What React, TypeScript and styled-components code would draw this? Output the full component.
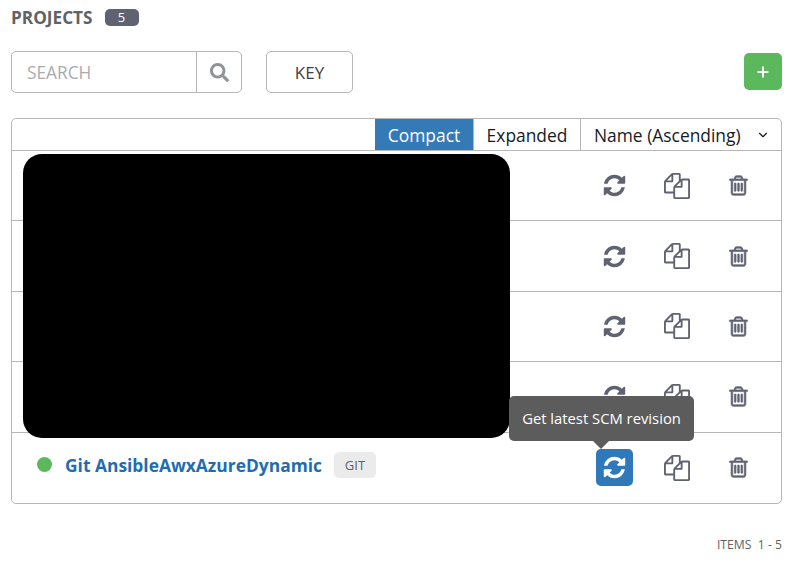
import styled, { createGlobalStyle } from 'styled-components';
import { FaSearch } from 'react-icons/fa';
import { ChevronDown, Plus } from 'lucide-react';

const GlobalStyle = createGlobalStyle`
  html, body {
    margin: 0;
    background: #fff;
    font-family: 'Open Sans', sans-serif;
  }
`;

const Page = styled.div`
  width: 800px;
  height: 563px;
  padding: 0 18px 0 11px;
  box-sizing: border-box;
  overflow: hidden;
  color: #161b1f;
`;

const TitleRow = styled.div`
  display: flex;
  align-items: center;
  gap: 12px;
  height: 34px;
`;

const Title = styled.h1`
  margin: 0;
  font-size: 17.2px;
  font-weight: 700;
  color: #606266;
`;

const CountBadge = styled.span`
  width: 34px;
  height: 17px;
  border-radius: 5px;
  background: #5f6270;
  color: #fff;
  font-size: 13px;
  line-height: 17px;
  text-align: center;
`;

const Toolbar = styled.div`
  display: flex;
  align-items: center;
  margin-top: 17px;
  height: 42px;
`;

const SearchBox = styled.div`
  display: flex;
  width: 231px;
  height: 42px;
  box-sizing: border-box;
  border: 1px solid #b7b7b7;
  border-radius: 5px;
`;

const SearchText = styled.span`
  flex: 1;
  padding-left: 15px;
  font-size: 17.3px;
  line-height: 41px;
  color: #a9abae;
`;

const SearchButton = styled.span`
  display: flex;
  align-items: center;
  justify-content: center;
  width: 44px;
  border-left: 1px solid #b7b7b7;
  color: #8f9499;
  font-size: 19px;
`;

const KeyButton = styled.button`
  width: 87px;
  height: 42px;
  margin-left: 24px;
  padding: 0;
  border: 1px solid #b7b7b7;
  border-radius: 5px;
  background: #fff;
  color: #3f4145;
  font-family: inherit;
  font-size: 17px;
`;

const AddButton = styled.button`
  display: flex;
  align-items: center;
  justify-content: center;
  align-self: flex-start;
  width: 38px;
  height: 37px;
  margin: 2px 0 0 auto;
  padding: 0;
  border: 0;
  border-radius: 5px;
  background: #5cb85c;
  color: #fff;
`;

const Panel = styled.section`
  position: relative;
  width: 771px;
  margin-top: 25px;
  box-sizing: border-box;
  border: 1px solid #b7b7b7;
  border-radius: 5px;
`;

const ViewBar = styled.div`
  display: flex;
  justify-content: flex-end;
  height: 31px;
  border-bottom: 1px solid #b7b7b7;
`;

const ViewTab = styled.span<{ $active?: boolean }>`
  display: flex;
  align-items: center;
  justify-content: center;
  width: ${(p) => (p.$active ? 99 : 107)}px;
  box-sizing: border-box;
  background: ${(p) => (p.$active ? '#337ab7' : '#fff')};
  color: ${(p) => (p.$active ? '#fff' : '#161b1f')};
  border-right: 1px solid #b7b7b7;
  font-size: 17.4px;
`;

const SortSelect = styled.span`
  display: flex;
  align-items: center;
  justify-content: space-between;
  width: 200px;
  padding: 0 11px 0 13px;
  box-sizing: border-box;
  font-size: 17.4px;
`;

const Row = styled.div<{ $last?: boolean }>`
  display: flex;
  align-items: center;
  height: ${(p) => (p.$last ? 70 : 70.4)}px;
  box-sizing: border-box;
  padding-left: 25px;
  border-bottom: ${(p) => (p.$last ? 'none' : '1px solid #b7b7b7')};
`;

const ProjectInfo = styled.div`
  display: flex;
  align-items: center;
  padding-bottom: 6px;
`;

const StatusDot = styled.span`
  width: 15px;
  height: 15px;
  border-radius: 50%;
  background: #5cb85c;
`;

const ProjectName = styled.a`
  margin-left: 13px;
  color: #1f6db0;
  font-size: 17.4px;
  font-weight: 700;
`;

const TypeTag = styled.span`
  margin-left: 12px;
  width: 42px;
  height: 26px;
  border-radius: 5px;
  background: #ebebeb;
  color: #606266;
  font-size: 13px;
  line-height: 26px;
  text-align: center;
`;

const Actions = styled.div`
  display: flex;
  align-items: center;
  gap: 25px;
  margin-left: auto;
  padding-right: 24px;
`;

const ActionButton = styled.span<{ $active?: boolean }>`
  display: flex;
  align-items: center;
  justify-content: center;
  width: 37px;
  height: 37px;
  border-radius: 5px;
  background: ${(p) => (p.$active ? '#2f78b9' : 'transparent')};
  color: ${(p) => (p.$active ? '#fff' : '#5f6270')};
`;

const Redaction = styled.div`
  position: absolute;
  left: 11px;
  top: 35px;
  width: 487px;
  height: 284px;
  border-radius: 19px;
  background: #000;
`;

const Tooltip = styled.div`
  position: absolute;
  left: 497px;
  top: 277px;
  width: 185px;
  height: 45px;
  border-radius: 5px;
  background: #5c5c5c;
  color: #fff;
  font-size: 14.8px;
  line-height: 44px;
  text-align: center;
  &::after {
    content: '';
    position: absolute;
    left: 84px;
    bottom: -8px;
    border-left: 8px solid transparent;
    border-right: 8px solid transparent;
    border-top: 8px solid #5c5c5c;
  }
`;

const Footer = styled.div`
  margin-top: 32px;
  width: 771px;
  text-align: right;
  color: #606266;
  font-size: 12.2px;
  white-space: pre;
`;

// Font Awesome 4 glyphs, react-icons only carries the FA5 redraws
const RefreshIcon = () => (
  <svg width="25" height="25" viewBox="0 0 1792 1792" fill="currentColor">
    <path d="M1639 1056q0 5-1 7-64 268-268 434.5t-478 166.5q-146 0-282.5-55t-243.5-157l-129 129q-19 19-45 19t-45-19-19-45v-448q0-26 19-45t45-19h448q26 0 45 19t19 45-19 45l-137 137q71 66 161 102t187 36q134 0 250-65t186-179q11-17 53-117 8-23 30-23h192q13 0 22.5 9.5t9.5 22.5zm25-800v448q0 26-19 45t-45 19h-448q-26 0-45-19t-19-45 19-45l138-138q-148-137-349-137-134 0-250 65t-186 179q-11 17-53 117-8 23-30 23h-199q-13 0-22.5-9.5t-9.5-22.5v-7q65-268 270-434.5t480-166.5q146 0 284 55.5t245 156.5l130-129q19-19 45-19t45 19 19 45z" />
  </svg>
);

const CopyIcon = () => (
  <svg width="26" height="26" viewBox="0 0 1792 1792" fill="currentColor">
    <path d="M1696 384q40 0 68 28t28 68v1216q0 40-28 68t-68 28h-960q-40 0-68-28t-28-68v-288h-544q-40 0-68-28t-28-68v-672q0-40 20-88t48-76l408-408q28-28 76-48t88-20h416q40 0 68 28t28 68v328q68-40 128-40h416zm-544 213l-299 299h299v-299zm-640-384l-299 299h299v-299zm196 647l316-316v-416h-384v416q0 40-28 68t-68 28h-416v640h512v-256q0-40 20-88t48-76zm956 804v-1152h-384v416q0 40-28 68t-68 28h-416v640h896z" />
  </svg>
);

const TrashIcon = () => (
  <svg width="23" height="23" viewBox="0 0 1792 1792" fill="currentColor" stroke="currentColor" strokeWidth="50">
    <path d="M704 736v576q0 14-9 23t-23 9h-64q-14 0-23-9t-9-23v-576q0-14 9-23t23-9h64q14 0 23 9t9 23zm256 0v576q0 14-9 23t-23 9h-64q-14 0-23-9t-9-23v-576q0-14 9-23t23-9h64q14 0 23 9t9 23zm256 0v576q0 14-9 23t-23 9h-64q-14 0-23-9t-9-23v-576q0-14 9-23t23-9h64q14 0 23 9t9 23zm128 724v-948h-896v948q0 22 7 40.5t14.5 27 10.5 8.5h832q3 0 10.5-8.5t14.5-27 7-40.5zm-672-1076h448l-48-117q-7-9-17-11h-317q-10 2-17 11zm928 32v64q0 14-9 23t-23 9h-96v948q0 83-47 143.5t-113 60.5h-832q-66 0-113-58.5t-47-141.5v-952h-96q-14 0-23-9t-9-23v-64q0-14 9-23t23-9h309l70-167q15-37 54-63t79-26h320q40 0 79 26t54 63l70 167h309q14 0 23 9t9 23z" />
  </svg>
);

const App = () => {
  const rows = [0, 1, 2, 3, 4];
  return (
    <>
      <GlobalStyle />
      <Page>
        <TitleRow>
          <Title>PROJECTS</Title>
          <CountBadge>5</CountBadge>
        </TitleRow>
        <Toolbar>
          <SearchBox>
            <SearchText>SEARCH</SearchText>
            <SearchButton>
              <FaSearch />
            </SearchButton>
          </SearchBox>
          <KeyButton>KEY</KeyButton>
          <AddButton>
            <Plus size={16} strokeWidth={3} />
          </AddButton>
        </Toolbar>
        <Panel>
          <ViewBar>
            <ViewTab $active>Compact</ViewTab>
            <ViewTab>Expanded</ViewTab>
            <SortSelect>
              Name (Ascending)
              <ChevronDown size={14} strokeWidth={2} />
            </SortSelect>
          </ViewBar>
          {rows.map((row) => (
            <Row key={row} $last={row === 4}>
              {row === 4 && (
                <ProjectInfo>
                  <StatusDot />
                  <ProjectName>Git AnsibleAwxAzureDynamic</ProjectName>
                  <TypeTag>GIT</TypeTag>
                </ProjectInfo>
              )}
              <Actions>
                <ActionButton $active={row === 4}>
                  <RefreshIcon />
                </ActionButton>
                <ActionButton>
                  <CopyIcon />
                </ActionButton>
                <ActionButton>
                  <TrashIcon />
                </ActionButton>
              </Actions>
            </Row>
          ))}
          <Redaction />
          <Tooltip>Get latest SCM revision</Tooltip>
        </Panel>
        <Footer>ITEMS  1 - 5</Footer>
      </Page>
    </>
  );
};

export default App;
